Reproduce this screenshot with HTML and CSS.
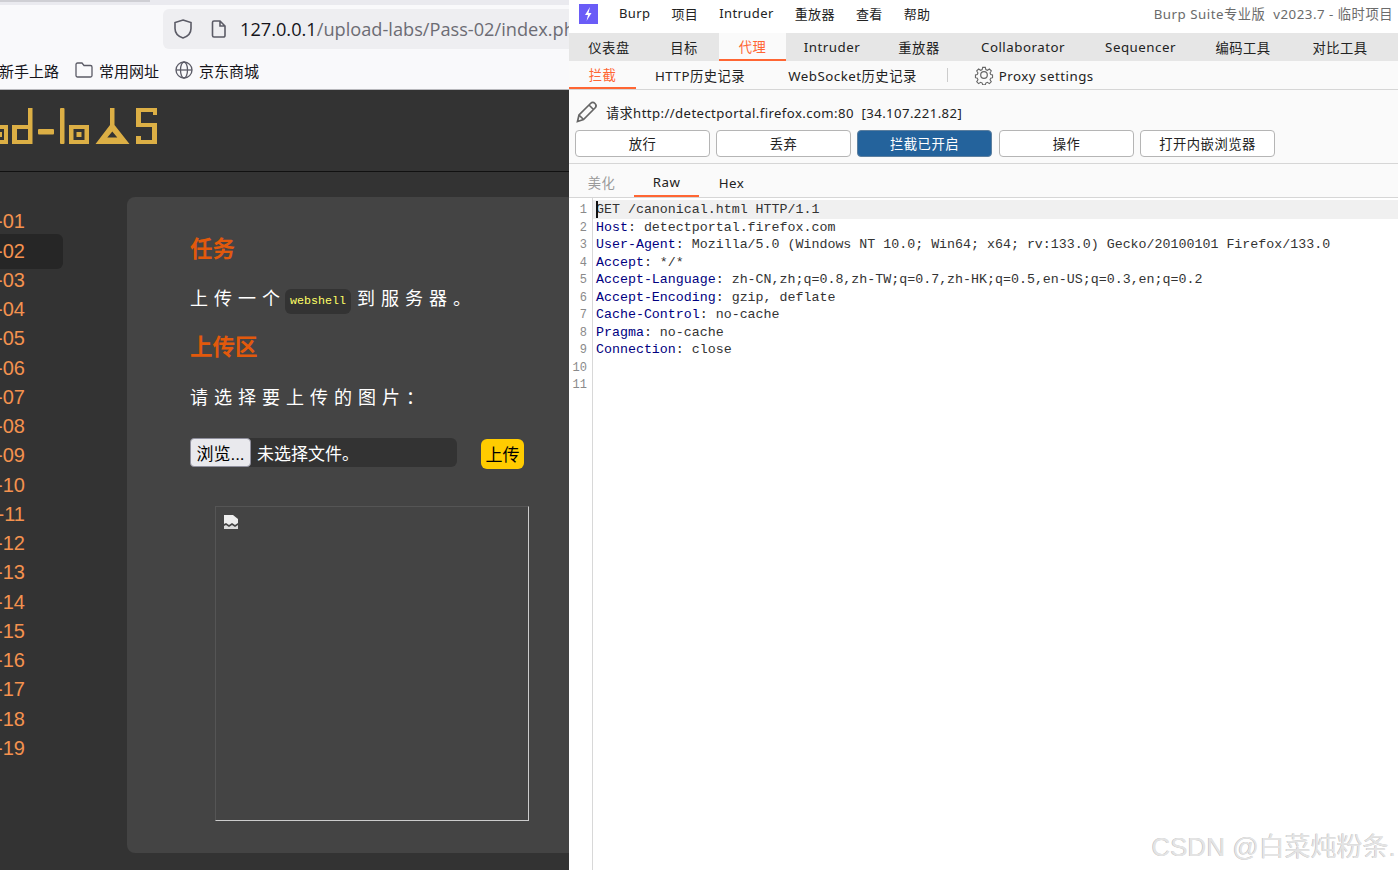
FILE: index.html
```html
<!DOCTYPE html>
<html lang="zh-CN">
<head>
  <meta charset="UTF-8">
  <title>upload-labs / Burp Suite</title>
  <link rel="stylesheet" href="styles.css">
</head>
<body>
  <div id="screen">
    <div id="browser">
      <div class="tabstrip"><div class="tab-edge"></div></div>
      <div class="toolbar">
        <div class="urlbar">
          <svg class="shield" width="20" height="22" viewBox="0 0 20 22"><path d="M10 2l8 2.500v6c0 4.500-3.500 8-8 9.500-4.500-1.500-8-5-8-9.500v-6z" fill="none" stroke="#5b5b66" stroke-width="1.600"/></svg>
          <svg class="pageicon" width="16" height="20" viewBox="0 0 16 20"><path d="M3 2h6l5 5v9.500a1.500 1.500 0 0 1-1.500 1.500h-9.500a1.500 1.500 0 0 1-1.500-1.500v-13a1.500 1.500 0 0 1 1.500-1.500zM9 2v5h5" fill="none" stroke="#5b5b66" stroke-width="1.600"/></svg>
          <span class="url"><b>127.0.0.1</b>/upload-labs/Pass-02/index.php</span>
        </div>
      </div>
      <div class="bookmarks">
        <span class="mark">新手上路</span>
        <span class="mark">
          <svg width="18" height="16" viewBox="0 0 18 16"><path d="M2.500 1h4.500l2 2.500h6.500a1.500 1.500 0 0 1 1.500 1.500v8.500a1.500 1.500 0 0 1-1.500 1.500h-13a1.500 1.500 0 0 1-1.500-1.500v-11a1.500 1.500 0 0 1 1.500-1.500z" fill="none" stroke="#5b5b66" stroke-width="1.300"/></svg>
          常用网址
        </span>
        <span class="mark">
          <svg width="18" height="18" viewBox="0 0 18 18"><g fill="none" stroke="#5b5b66" stroke-width="1.300"><circle cx="9" cy="9" r="8"/><ellipse cx="9" cy="9" rx="3.500" ry="8"/><path d="M1 9h16"/></g></svg>
          京东商城
        </span>
      </div>
      <div class="site">
        <header class="site-head">
          <svg class="logo" width="160" height="40" viewBox="0 0 160 40">
            <g fill="#dcaf45">
              <path fill-rule="evenodd" d="M-12 20h20v19h-20zM-7 24v11h11v-11z"/>
              <rect x="-2" y="27" width="4" height="5"/>
              <path fill-rule="evenodd" d="M28 3h4.500v36h-20.500v-19h16zM17 24v11h11v-11z"/>
              <rect x="38" y="24" width="16" height="5.500" rx="1"/>
              <rect x="60" y="3" width="4.500" height="36" rx="1"/>
              <path fill-rule="evenodd" d="M69 20h20v19h-20zM73.500 24v11h11v-11z"/>
              <rect x="76.500" y="27" width="5" height="5"/>
              <path fill-rule="evenodd" d="M110 3h4.500v17l15 19h-34l14.500-19zM112.300 26.500l-5 6h10z"/>
              <path d="M136 3h21v7h-4v-3h-12v11h16v21h-21v-8h5v4h11v-13h-16z"/>
            </g>
          </svg>
        </header>
        <div class="site-body">
          <nav class="passes">
            <a>Pass-01</a>
            <a class="on">Pass-02</a>
            <a>Pass-03</a>
            <a>Pass-04</a>
            <a>Pass-05</a>
            <a>Pass-06</a>
            <a>Pass-07</a>
            <a>Pass-08</a>
            <a>Pass-09</a>
            <a>Pass-10</a>
            <a>Pass-11</a>
            <a>Pass-12</a>
            <a>Pass-13</a>
            <a>Pass-14</a>
            <a>Pass-15</a>
            <a>Pass-16</a>
            <a>Pass-17</a>
            <a>Pass-18</a>
            <a>Pass-19</a>
          </nav>
          <main class="card">
            <h2>任务</h2>
            <p class="spaced">上传一个<code>webshell</code>到服务器。</p>
            <h2 class="second">上传区</h2>
            <p class="spaced choose">请选择要上传的图片：</p>
            <div class="upload-row">
              <div class="file-input">
                <span class="browse">浏览...</span>
                <span>未选择文件。</span>
              </div>
              <span class="submit">上传</span>
            </div>
            <div class="preview">
              <svg width="16" height="16" viewBox="0 0 16 16"><path d="M1 1h9l5 4v4l-3 2-3-2-3 2-3-2-2 1z" fill="#eee"/><path d="M1 12l2-1 3 2 3-2 3 2 3-2v4h-14z" fill="#ddd"/></svg>
            </div>
          </main>
        </div>
      </div>
    </div>

    <div id="burp">
      <div class="menubar">
        <svg class="burp-logo" width="19" height="20" viewBox="0 0 19 20"><rect width="19" height="20" fill="#6a5cf7"/><path d="M11 3l-5 8h3l-1.500 6 5-8h-3z" fill="#fff"/></svg>
        <div class="menu">
          <span>Burp</span><span>项目</span><span>Intruder</span><span>重放器</span><span>查看</span><span>帮助</span>
        </div>
        <span class="title">Burp Suite专业版&nbsp; v2023.7 - 临时项目</span>
      </div>
      <div class="maintabs">
        <span style="width:80px">仪表盘</span>
        <span style="width:70px">目标</span>
        <span class="on" style="width:67px">代理</span>
        <span style="width:92px">Intruder</span>
        <span style="width:82px">重放器</span>
        <span style="width:126px">Collaborator</span>
        <span style="width:109px">Sequencer</span>
        <span style="width:96px">编码工具</span>
        <span style="width:98px">对比工具</span>
      </div>
      <div class="subtabs">
        <span class="on">拦截</span>
        <span class="http">HTTP历史记录</span>
        <span class="ws">WebSocket历史记录</span>
        <i class="sep"></i>
        <svg class="gear" width="20" height="20" viewBox="0 0 20 20"><g fill="none" stroke="#666" stroke-width="1.200"><path d="M8.500 1.500h3l.5 2.500 1.800.8 2.200-1.400 2.100 2.100-1.400 2.200.8 1.800 2 .5v3l-2 .5-.8 1.800 1.400 2.200-2.100 2.100-2.200-1.400-1.800.8-.5 2h-3l-.5-2-1.800-.8-2.200 1.400-2.100-2.100 1.400-2.200-.8-1.800-2-.5v-3l2-.5.8-1.800-1.400-2.200 2.100-2.100 2.200 1.400 1.800-.8z" transform="translate(1 1) scale(.9)"/><circle cx="10" cy="10" r="3.300"/></g></svg>
        <span class="settings">Proxy settings</span>
      </div>
      <div class="target">
        <svg width="24" height="24" viewBox="0 0 24 24"><path d="M2.500 21.500l1.500-6.500 11.500-11.500a3 3 0 0 1 4.500 4.500l-11.500 11.500zM4 15l5 5M14 5l5 5" fill="none" stroke="#666" stroke-width="1.700"/></svg>
        <span>请求http://detectportal.firefox.com:80&nbsp; [34.107.221.82]</span>
      </div>
      <div class="actions">
        <button>放行</button>
        <button>丢弃</button>
        <button class="intercept">拦截已开启</button>
        <button>操作</button>
        <button>打开内嵌浏览器</button>
      </div>
      <div class="viewtabs">
        <span class="off">美化</span>
        <span class="on">Raw</span>
        <span>Hex</span>
      </div>
      <div class="editor">
        <div class="gutter">
          <div>1</div><div>2</div><div>3</div><div>4</div><div>5</div><div>6</div><div>7</div><div>8</div><div>9</div><div>10</div><div>11</div>
        </div>
        <div class="code">
          <div class="current"><i class="caret"></i>GET /canonical.html HTTP/1.1</div>
          <div><em>Host</em>: detectportal.firefox.com</div>
          <div><em>User-Agent</em>: Mozilla/5.0 (Windows NT 10.0; Win64; x64; rv:133.0) Gecko/20100101 Firefox/133.0</div>
          <div><em>Accept</em>: */*</div>
          <div><em>Accept-Language</em>: zh-CN,zh;q=0.8,zh-TW;q=0.7,zh-HK;q=0.5,en-US;q=0.3,en;q=0.2</div>
          <div><em>Accept-Encoding</em>: gzip, deflate</div>
          <div><em>Cache-Control</em>: no-cache</div>
          <div><em>Pragma</em>: no-cache</div>
          <div><em>Connection</em>: close</div>
        </div>
      </div>
      <div class="watermark">CSDN @白菜炖粉条.</div>
    </div>
  </div>
</body>
</html>
```

FILE: styles.css
```css
* {
  box-sizing: border-box;
}

html,
body {
  margin: 0;
  height: 100%;
  overflow: hidden;
}

body {
  font-family: "Noto Sans", "Noto Sans CJK SC", sans-serif;
  background-color: #fff;
}

#screen {
  display: grid;
  grid-template-columns: 569px 829px;
  width: 1398px;
  height: 870px;
}

/* left: firefox with the upload-labs page */

#browser {
  display: flex;
  flex-direction: column;
  overflow: hidden;
  background-color: #333;
}

.tabstrip {
  height: 4px;
  background-color: #eaeaef;
  flex-shrink: 0;
}

.tab-edge {
  width: 150px;
  height: 2px;
  background-color: #cfcfd4;
}

.toolbar {
  height: 54px;
  padding: 4px 0 0 163px;
  background-color: #f9f9fb;
  border-top: 1px solid #eaeaef;
  flex-shrink: 0;
}

.urlbar {
  display: flex;
  align-items: center;
  width: 460px;
  height: 40px;
  padding-left: 10px;
  background-color: #eeeef1;
  border-radius: 6px;
  white-space: nowrap;
}

.urlbar svg {
  flex-shrink: 0;
}

.pageicon {
  margin-left: 18px;
}

.url {
  margin-left: 13px;
  font-family: "Open Sans", sans-serif;
  font-size: 18.200px;
  color: #6c6c74;
}

.url b {
  font-weight: 400;
  color: #15141a;
}

.bookmarks {
  display: flex;
  align-items: center;
  height: 32px;
  padding-bottom: 7px;
  background-color: #f9f9fb;
  border-bottom: 1px solid #b8b8bc;
  font-size: 15px;
  color: #15141a;
  flex-shrink: 0;
}

.mark {
  display: flex;
  align-items: center;
  gap: 6px;
  margin-right: 16px;
}

.mark:first-child {
  margin-left: -1px;
}

.site {
  flex: 1;
  display: flex;
  flex-direction: column;
  font-family: "Liberation Sans", "Noto Sans CJK SC", sans-serif;
}

.site-head {
  height: 82px;
  padding-top: 15px;
  border-bottom: 1px solid #111;
  flex-shrink: 0;
}

.logo {
  display: block;
  overflow: visible;
}

.site-body {
  display: flex;
  padding-top: 25px;
}

.passes {
  display: flex;
  flex-direction: column;
  width: 127px;
  padding-top: 10.300px;
  flex-shrink: 0;
}

.passes a {
  display: flex;
  justify-content: flex-end;
  align-items: center;
  width: 63px;
  height: 29.250px;
  padding-right: 38px;
  font-size: 20px;
  color: #f4924f;
  white-space: nowrap;
}

.passes a.on {
  height: 35px;
  margin: -3px 0 -2.750px;
  background-color: #262626;
  border-radius: 0 6px 6px 0;
}

.card {
  width: 560px;
  height: 656px;
  padding: 38px 0 0 63px;
  background-color: #444;
  border-radius: 8px 0 0 8px;
  flex-shrink: 0;
}

.card h2 {
  margin: 0;
  font-size: 22.500px;
  line-height: 30px;
  font-weight: 700;
  color: #e2590c;
}

.card h2.second {
  margin-top: 19px;
}

.spaced {
  height: 30px;
  margin: 19px 0 0;
  font-size: 18px;
  line-height: 30px;
  letter-spacing: 6px;
  color: #fff;
  white-space: nowrap;
}

.spaced.choose {
  margin-top: 20px;
}

.spaced code {
  display: inline-block;
  height: 25px;
  padding: 0 5px;
  margin: 0 6px 0 -1px;
  font-family: "Liberation Mono", monospace;
  font-size: 11.670px;
  line-height: 25px;
  letter-spacing: 0;
  color: #ffff66;
  background-color: #333;
  border-radius: 6px;
  vertical-align: 1px;
}

.upload-row {
  display: flex;
  align-items: flex-start;
  height: 31px;
  margin-top: 25px;
  font-size: 17px;
}

.file-input {
  display: flex;
  align-items: center;
  gap: 6px;
  width: 267px;
  height: 29px;
  color: #fff;
  background-color: #333;
  border-radius: 6px;
}

.browse {
  display: flex;
  align-items: center;
  justify-content: center;
  width: 61px;
  height: 29px;
  color: #000;
  background-color: #e9e9ed;
  border: 1px solid #8f8f9d;
  border-radius: 4px;
}

.submit {
  display: flex;
  align-items: center;
  justify-content: center;
  width: 43px;
  height: 30px;
  margin: 1px 0 0 24px;
  padding-bottom: 1px;
  color: #000;
  background-color: #ffcc00;
  border-radius: 6px;
}

.preview {
  width: 314px;
  height: 315px;
  margin: 37px 0 0 25px;
  padding: 7px 0 0 7px;
  border: 1px solid;
  border-color: #555 #ccc #ccc #555;
}

.preview svg {
  display: block;
}

/* right: burp suite */

#burp {
  position: relative;
  display: flex;
  flex-direction: column;
  overflow: hidden;
  background-color: #fff;
  font-size: 13.300px;
  letter-spacing: .5px;
  color: #222;
}

.menubar {
  display: flex;
  align-items: center;
  height: 33px;
  padding: 0 5px 6px 10px;
  flex-shrink: 0;
}

.menu {
  display: flex;
  gap: 21px;
  margin-left: 21px;
  font-size: 13px;
  letter-spacing: .4px;
}

.title {
  margin-left: auto;
  color: #6b6b6b;
}

.maintabs {
  display: flex;
  height: 28px;
  background-color: #e6e6e6;
  flex-shrink: 0;
}

.maintabs span {
  display: flex;
  align-items: center;
  justify-content: center;
}

.maintabs .on {
  color: #ff6633;
  background-color: #fafafa;
  border-bottom: 2px solid #ff6633;
}

.subtabs {
  display: flex;
  align-items: center;
  height: 29px;
  background-color: #fafafa;
  border-bottom: 1px solid #d6d6d6;
  flex-shrink: 0;
}

.subtabs .on {
  display: flex;
  align-items: center;
  justify-content: center;
  width: 67px;
  height: 28px;
  color: #ff6633;
  border-bottom: 2px solid #ff6633;
}

.subtabs .http {
  margin-left: 19px;
}

.subtabs .ws {
  margin-left: 43px;
}

.sep {
  width: 1px;
  height: 14px;
  margin-left: 30px;
  background-color: #ccc;
}

.gear {
  margin-left: 26px;
  flex-shrink: 0;
}

.settings {
  margin: 2px 0 0 5px;
}

.target {
  display: flex;
  align-items: center;
  gap: 7px;
  height: 40px;
  padding: 4px 0 0 6px;
  font-size: 13.150px;
  letter-spacing: .42px;
  background-color: #fafafa;
  flex-shrink: 0;
}

.actions {
  display: flex;
  gap: 6px;
  height: 34px;
  padding-left: 6px;
  background-color: #fafafa;
  border-bottom: 1px solid #d6d6d6;
  flex-shrink: 0;
}

.actions button {
  width: 135px;
  height: 27px;
  padding: 0;
  font: inherit;
  letter-spacing: inherit;
  color: #222;
  background-color: #fff;
  border: 1px solid #b5b5b5;
  border-radius: 4px;
}

.actions .intercept {
  margin-right: 1px;
  color: #fff;
  background-color: #24639c;
  border-color: #5c7f9f;
}

.viewtabs {
  display: flex;
  height: 34px;
  background-color: #fafafa;
  border-bottom: 1px solid #d6d6d6;
  flex-shrink: 0;
}

.viewtabs span {
  display: flex;
  align-items: center;
  justify-content: center;
  width: 65px;
  padding-top: 4px;
}

.viewtabs .off {
  padding-top: 3px;
  color: #9a9a9a;
}

.viewtabs .on {
  height: 33px;
  border-bottom: 2px solid #ff6633;
}

.editor {
  flex: 1;
  display: flex;
  padding-top: 3px;
  font-family: "Liberation Mono", monospace;
  font-size: 13.300px;
  line-height: 17.550px;
  letter-spacing: 0;
}

.gutter {
  width: 24px;
  margin-top: -3px;
  padding: 4px 5px 0 0;
  font-size: 12px;
  text-align: right;
  color: #8a8a8a;
  border-right: 1px solid #d8d8d8;
  flex-shrink: 0;
}

.code {
  flex: 1;
  color: #333;
}

.code em {
  font-style: normal;
  color: #000080;
}

.code > div {
  padding-left: 3px;
  white-space: pre;
}

.code .current {
  position: relative;
  margin-top: -1px;
  padding-top: 1px;
  background-color: #f0f0f0;
}

.caret {
  position: absolute;
  left: 3px;
  top: 1px;
  width: 2px;
  height: 17px;
  background-color: #111;
}

.watermark {
  position: absolute;
  right: 2px;
  bottom: 6px;
  font-family: "Liberation Sans", "Noto Sans CJK SC", sans-serif;
  font-size: 26px;
  line-height: 34px;
  letter-spacing: 0;
  color: #e4e4e4;
  text-shadow: -.5px -.5px .5px #b5b5b5;
}
```
